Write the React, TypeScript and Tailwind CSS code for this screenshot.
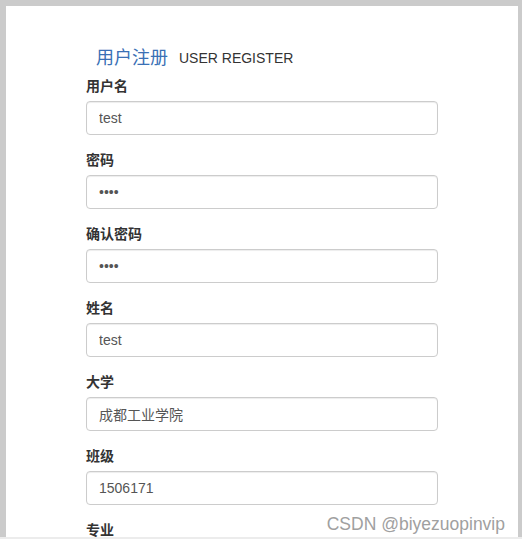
import React from "react";

const fields: { label: string; value: string; type?: string }[] = [
  { label: "用户名", value: "test" },
  { label: "密码", value: "1234", type: "password" },
  { label: "确认密码", value: "1234", type: "password" },
  { label: "姓名", value: "test" },
  { label: "大学", value: "成都工业学院" },
  { label: "班级", value: "1506171" },
  { label: "专业", value: "" },
];

const font = "font-['Liberation_Sans','Noto_Sans_CJK_SC',sans-serif]";

function FormGroup({ label, value, type }: { label: string; value: string; type?: string }) {
  return (
    <div className="mb-[15px]">
      <label className="mb-[5px] block text-[14px] font-bold leading-[20px] text-[#333]">
        {label}
      </label>
      <input
        readOnly
        type={type ?? "text"}
        value={value}
        className={`block h-[34px] w-full rounded-[4px] border border-[#ccc] bg-white px-3 text-[14px] text-[#555] shadow-[inset_0_1px_1px_rgba(0,0,0,0.075)] outline-none ${font}`}
      />
    </div>
  );
}

export default function App() {
  return (
    <div className={`flex h-[539px] w-[522px] flex-col overflow-hidden bg-[#cbcbcb] ${font}`}>
      <div className="flex min-h-0 flex-1 pl-[6px] pr-[4px] pt-[6px]">
        <div className="relative flex-1 overflow-hidden bg-white pl-[80px] pt-[40px]">
          <div className="w-[352px]">
            <div className="mb-[6px] flex h-[24px] items-center pl-[10px] leading-[24px]">
              <span className="text-[18px] text-[#3a70b5]">用户注册</span>
              <span className="ml-[11px] text-[14px] text-[#333]">USER REGISTER</span>
            </div>
            {fields.map((f) => (
              <FormGroup key={f.label} {...f} />
            ))}
          </div>
          <div className="absolute right-[13px] top-[506px] text-[17.5px] leading-[24px] text-[#a0a0a0] [text-shadow:0_0_1px_#fff]">
            CSDN @biyezuopinvip
          </div>
        </div>
      </div>
      <div className="h-[2px] shrink-0 bg-[#ececec]" />
    </div>
  );
}
